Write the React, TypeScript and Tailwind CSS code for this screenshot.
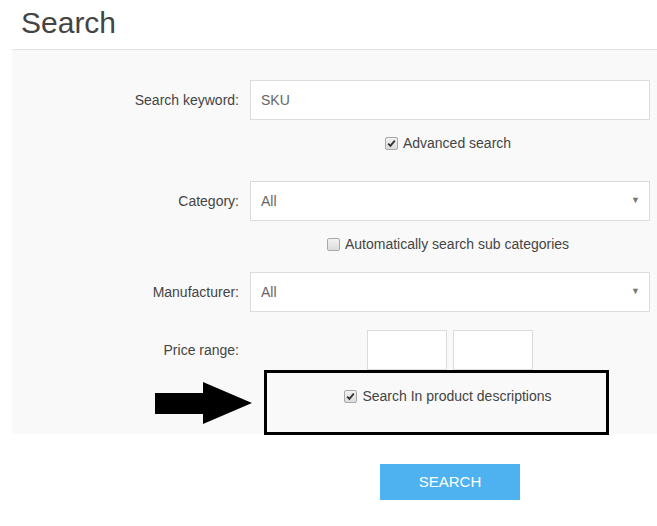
import React from "react";

const FONT = { fontFamily: '"Liberation Sans", Arial, sans-serif' };

function Check({ checked }: { checked?: boolean }) {
  return (
    <span className="inline-flex w-[13px] h-[13px] items-center justify-center rounded-[2px] border border-[#a9a9a9] bg-gradient-to-b from-[#f2f2f2] to-[#dcdcdc]">
      {checked && (
        <svg width="9" height="9" viewBox="0 0 9 9">
          <path d="M1.2 4.6 L3.4 6.9 L7.8 1.6" fill="none" stroke="#333" strokeWidth="1.8" />
        </svg>
      )}
    </span>
  );
}

function Label({ children }: { children: React.ReactNode }) {
  return <div className="w-[227px] shrink-0 text-right text-[14px] text-[#444]">{children}</div>;
}

function Select({ value }: { value: string }) {
  return (
    <div className="ml-[11px] w-[400px] h-[40px] flex items-center justify-between border border-[#dcdcdc] bg-white pl-[10px] pr-[9px] text-[14px] text-[#666]">
      <span>{value}</span>
      <span className="text-[9px] text-[#777]">▼</span>
    </div>
  );
}

function CheckRow({ checked, label, className }: { checked?: boolean; label: string; className: string }) {
  return (
    <div className={`ml-[236px] w-[400px] h-[20px] flex items-center justify-center gap-[5px] text-[14px] text-[#444] ${className}`}>
      <Check checked={checked} />
      <span>{label}</span>
    </div>
  );
}

export default function App() {
  return (
    <div className="w-[657px] bg-white" style={FONT}>
      <h1 className="pl-[21px] pt-[4px] h-[49px] text-[30px] leading-[38px] text-[#444]">Search</h1>

      <div className="relative ml-[12px] border-t border-[#e3e3e3] bg-[#f9f9f9] pt-[30px] pb-[28px]">
        <div className="flex items-center">
          <Label>Search keyword:</Label>
          <div className="ml-[11px] w-[400px] h-[40px] flex items-center border border-[#dcdcdc] bg-white pl-[10px] text-[14px] text-[#666]">
            SKU
          </div>
        </div>

        <CheckRow checked label="Advanced search" className="mt-[13px]" />

        <div className="mt-[28px] flex items-center">
          <Label>Category:</Label>
          <Select value="All" />
        </div>

        <CheckRow label="Automatically search sub categories" className="mt-[13px]" />

        <div className="mt-[18px] flex items-center">
          <Label>Manufacturer:</Label>
          <Select value="All" />
        </div>

        <div className="mt-[18px] flex items-center">
          <Label>Price range:</Label>
          <div className="ml-[11px] w-[400px] flex justify-center gap-[6px]">
            <div className="w-[80px] h-[40px] border border-[#dcdcdc] bg-white" />
            <div className="w-[80px] h-[40px] border border-[#dcdcdc] bg-white" />
          </div>
        </div>

        <CheckRow checked label="Search In product descriptions" className="mt-[16px]" />

        {/* annotation */}
        <div className="absolute left-[252px] top-[320px] w-[345px] h-[65px] border-[3px] border-black" />
        <svg className="absolute left-[143px] top-[332px]" width="97" height="42" viewBox="0 0 97 42">
          <polygon points="0,11 48,11 48,0 97,21 48,42 48,32 0,32" fill="#000" />
        </svg>
      </div>

      <div className="mt-[30px] flex">
        <div className="ml-[380px] w-[140px] h-[36px] flex items-center justify-center bg-[#4db2ef] text-[15px] text-white">
          SEARCH
        </div>
      </div>
      <div className="h-[26px]" />
    </div>
  );
}
